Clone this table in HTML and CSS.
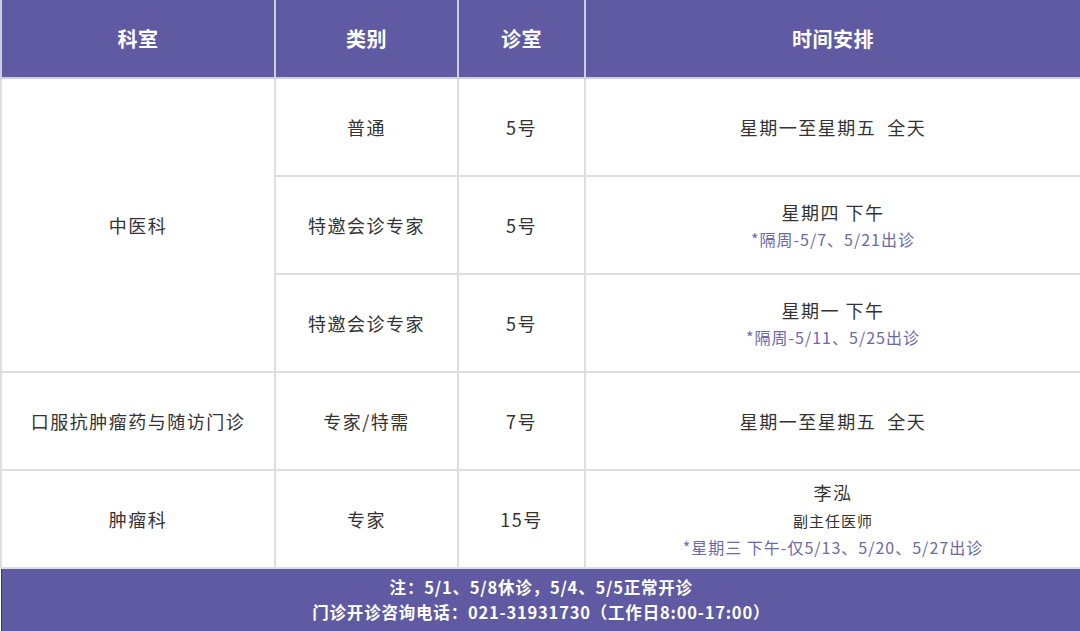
FILE: index.html
```html
<!DOCTYPE html>
<html lang="zh-CN">
<head>
<meta charset="utf-8">
<link rel="stylesheet" href="styles.css">
</head>
<body>
<table class="schedule">
  <colgroup>
    <col class="c1"><col class="c2"><col class="c3"><col class="c4">
  </colgroup>
  <thead>
    <tr class="head">
      <th>科室</th><th>类别</th><th>诊室</th><th>时间安排</th>
    </tr>
  </thead>
  <tbody>
    <tr class="row">
      <td rowspan="3">中医科</td>
      <td>普通</td><td>5号</td>
      <td><div class="main">星期一至星期五&nbsp;&nbsp;全天</div></td>
    </tr>
    <tr class="row">
      <td>特邀会诊专家</td><td>5号</td>
      <td><div class="main">星期四 下午</div><div class="note">*隔周-5/7、5/21出诊</div></td>
    </tr>
    <tr class="row">
      <td>特邀会诊专家</td><td>5号</td>
      <td><div class="main">星期一 下午</div><div class="note">*隔周-5/11、5/25出诊</div></td>
    </tr>
    <tr class="row">
      <td>口服抗肿瘤药与随访门诊</td><td>专家/特需</td><td>7号</td>
      <td><div class="main">星期一至星期五&nbsp;&nbsp;全天</div></td>
    </tr>
    <tr class="row">
      <td>肿瘤科</td><td>专家</td><td>15号</td>
      <td><div class="main">李泓</div><div class="title">副主任医师</div><div class="note">*星期三 下午-仅5/13、5/20、5/27出诊</div></td>
    </tr>
  </tbody>
  <tfoot>
    <tr class="foot">
      <td colspan="4">
        <div>注：5/1、5/8休诊，5/4、5/5正常开诊</div>
        <div>门诊开诊咨询电话：021-31931730（工作日8:00-17:00）</div>
      </td>
    </tr>
  </tfoot>
</table>
</body>
</html>
```

FILE: styles.css
```css
html, body {
  margin: 0;
  padding: 0;
  background: #ffffff;
}
body {
  font-family: "Noto Sans CJK SC", "Noto Sans", sans-serif;
  color: #333333;
  width: 1080px;
  height: 631px;
  overflow: hidden;
}
.schedule {
  width: 1080px;
  border-collapse: collapse;
  table-layout: fixed;
}
.c1 { width: 274px; }
.c2 { width: 183px; }
.c3 { width: 127px; }
.c4 { width: 496px; }
.schedule th,
.schedule td {
  border: 2px solid #dedede;
  text-align: center;
  vertical-align: middle;
  padding: 0;
}
.head th {
  background: #5f5aa2;
  color: #ffffff;
  font-size: 20px;
  font-weight: 700;
  height: 77px;
  letter-spacing: 0.5px;
  border-top: none;
  border-color: #cfcde0;
}
.row td {
  height: 96px;
  font-size: 18px;
  line-height: 26px;
  letter-spacing: 1.5px;
}
.main {
  font-size: 18px;
  line-height: 26px;
}
.title {
  font-size: 15px;
  line-height: 24px;
  margin-top: 4px;
  letter-spacing: 1px;
}
.note {
  font-size: 16px;
  line-height: 24px;
  margin-top: 2px;
  color: #6c69a8;
  letter-spacing: 1px;
}
.foot td {
  background: #5f5aa2;
  color: #ffffff;
  font-weight: 700;
  font-size: 16.5px;
  line-height: 25px;
  height: 62px;
  border-top: 2px solid #2e2b55;
  border-left: 1px solid #3e3a70;
  border-right: none;
  border-bottom: none;
  letter-spacing: 0.8px;
}
```
